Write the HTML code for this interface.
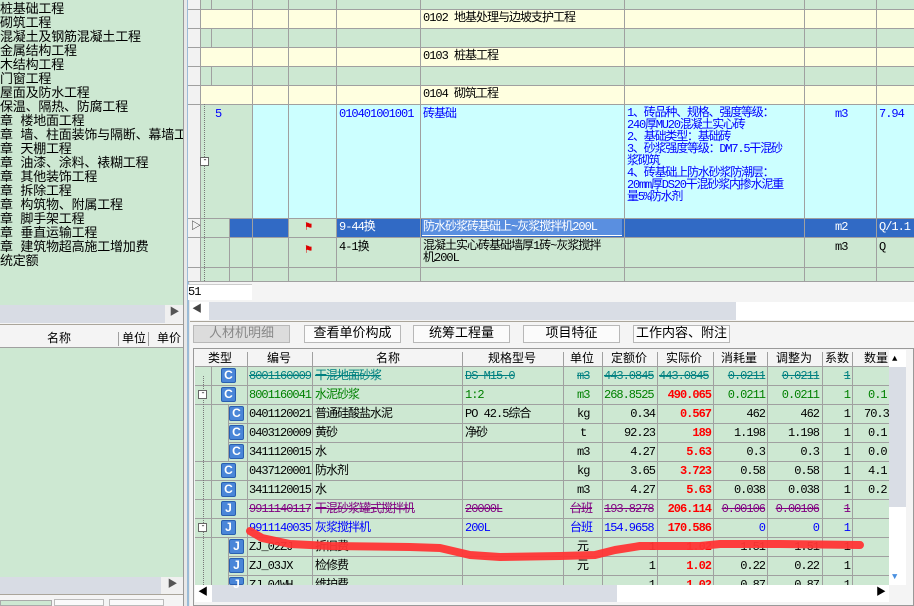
<!DOCTYPE html>
<html><head><meta charset="utf-8"><style>
*{margin:0;padding:0;box-sizing:border-box}
body{width:914px;height:606px;overflow:hidden;background:#f4f4f4;position:relative;font-family:"Liberation Mono","Noto Sans CJK SC",monospace;font-size:12px;letter-spacing:-1px;color:#000}
.a{position:absolute}
.t{position:absolute;white-space:nowrap;line-height:14px}
.vl{position:absolute;width:1px;background:#a0a0a0}
.hl{position:absolute;height:1px;background:#a0a0a0}
.ic{position:absolute;width:15px;height:15px;background:#4a86d8;border:1px solid #2a5fb0;border-radius:2px;color:#fff;font:bold 12px "Liberation Sans",sans-serif;text-align:center;line-height:13px;letter-spacing:0}
.btn{position:absolute;top:325px;height:18px;width:97px;background:#fbfbfb;border:1px solid #b8b8b8;text-align:center;line-height:16px;font-size:13px;white-space:nowrap;letter-spacing:0}
.r{text-align:right}
</style></head><body>
<!-- left panel -->
<div class="a" style="left:0;top:0;width:183px;height:305px;background:#cde8d2"></div>
<div class="t" style="left:0;top:3px;font-size:13px;line-height:14px;letter-spacing:-0.2px">桩基础工程<br>砌筑工程<br>混凝土及钢筋混凝土工程<br>金属结构工程<br>木结构工程<br>门窗工程<br>屋面及防水工程<br>保温、隔热、防腐工程<br>章 楼地面工程<br>章 墙、柱面装饰与隔断、幕墙工程<br>章 天棚工程<br>章 油漆、涂料、裱糊工程<br>章 其他装饰工程<br>章 拆除工程<br>章 构筑物、附属工程<br>章 脚手架工程<br>章 垂直运输工程<br>章 建筑物超高施工增加费<br>统定额</div>
<div class="a" style="left:0;top:305px;width:183px;height:18px;background:#d8dce4"></div>
<div class="a" style="left:165px;top:305px;width:18px;height:18px;background:#f0f0f0;color:#555;font-size:10px;text-align:center;line-height:18px">▶</div>
<div class="hl" style="left:0;top:324px;width:183px;background:#aaa59a"></div>
<div class="a" style="left:0;top:330px;width:183px;height:18px;background:#f4f4f4;border-bottom:1px solid #a0a0a0"></div>
<div class="t" style="left:47px;top:332px;letter-spacing:0">名称</div>
<div class="vl" style="left:118px;top:332px;height:14px"></div>
<div class="t" style="left:122px;top:332px;letter-spacing:0">单位</div>
<div class="vl" style="left:148px;top:332px;height:14px"></div>
<div class="t" style="left:157px;top:332px;letter-spacing:0">单价</div>
<div class="a" style="left:0;top:348px;width:183px;height:229px;background:#cde8d2"></div>
<div class="a" style="left:0;top:577px;width:183px;height:17px;background:#d8dce4"></div>
<div class="a" style="left:161px;top:577px;width:22px;height:17px;background:#f0f0f0;color:#555;font-size:10px;text-align:center;line-height:17px">▶</div>
<div class="hl" style="left:0;top:594px;width:183px;background:#aaa59a"></div>
<div class="a" style="left:0;top:600px;width:52px;height:6px;border:1px solid #aaa;background:#cde8d2"></div>
<div class="a" style="left:54px;top:599px;width:50px;height:7px;border:1px solid #bbb;background:#fafafa"></div>
<div class="a" style="left:109px;top:599px;width:55px;height:7px;border:1px solid #bbb;background:#fafafa"></div>
<!-- divider -->
<div class="a" style="left:183px;top:0;width:7px;height:606px;background:#e8e8e8;border-left:1px solid #999"></div>
<div class="a" style="left:187px;top:0;width:2px;height:606px;background:#9bbbd6"></div>

<!-- top grid -->
<div class="a" style="left:188px;top:0;width:726px;height:281px;background:#cde8d2"></div>
<div class="a" style="left:188px;top:0;width:12px;height:281px;background:#f2f2f2"></div>
<div class="a" style="left:200px;top:9px;width:714px;height:19px;background:#ffffe0"></div>
<div class="a" style="left:200px;top:47px;width:714px;height:19px;background:#ffffe0"></div>
<div class="a" style="left:200px;top:85px;width:714px;height:19px;background:#ffffe0"></div>
<div class="a" style="left:252px;top:104px;width:662px;height:114px;background:#ccffff"></div>
<div class="a" style="left:229px;top:218px;width:59px;height:19px;background:#316ac5"></div>
<div class="a" style="left:336px;top:218px;width:578px;height:19px;background:#316ac5"></div>
<div class="vl" style="left:200px;top:0;height:281px"></div>
<div class="vl" style="left:211px;top:0;height:9px"></div>
<div class="vl" style="left:211px;top:28px;height:19px"></div>
<div class="vl" style="left:211px;top:66px;height:19px"></div>
<div class="vl" style="left:229px;top:218px;height:63px"></div>
<div class="vl" style="left:252px;top:0;height:281px"></div>
<div class="vl" style="left:288px;top:0;height:281px"></div>
<div class="vl" style="left:336px;top:0;height:281px"></div>
<div class="vl" style="left:420px;top:0;height:281px"></div>
<div class="vl" style="left:624px;top:0;height:281px"></div>
<div class="vl" style="left:804px;top:0;height:281px"></div>
<div class="vl" style="left:876px;top:0;height:281px"></div>
<div class="hl" style="left:188px;top:9px;width:726px"></div>
<div class="hl" style="left:188px;top:28px;width:726px"></div>
<div class="hl" style="left:188px;top:47px;width:726px"></div>
<div class="hl" style="left:188px;top:66px;width:726px"></div>
<div class="hl" style="left:188px;top:85px;width:726px"></div>
<div class="hl" style="left:188px;top:104px;width:726px"></div>
<div class="hl" style="left:188px;top:218px;width:726px"></div>
<div class="hl" style="left:188px;top:237px;width:726px"></div>
<div class="hl" style="left:188px;top:267px;width:726px"></div>
<div class="hl" style="left:188px;top:281px;width:726px"></div>
<div class="a" style="left:204px;top:104px;width:1px;height:177px;border-left:1px dotted #777"></div>
<div class="a" style="left:200px;top:157px;width:9px;height:9px;border:1px solid #666;background:#fff;font-size:8px;line-height:6px;text-align:center">-</div>
<div class="t" style="left:423px;top:11px">0102 地基处理与边坡支护工程</div>
<div class="t" style="left:423px;top:49px">0103 桩基工程</div>
<div class="t" style="left:423px;top:87px">0104 砌筑工程</div>
<div class="t" style="left:215px;top:107px;color:#0000ff">5</div>
<div class="t" style="left:339px;top:107px;color:#0000ff">010401001001</div>
<div class="t" style="left:423px;top:107px;color:#0000ff">砖基础</div>
<div class="t" style="left:627px;top:107px;color:#0000ff;line-height:12px;font-size:12px;letter-spacing:-1.2px">1、砖品种、规格、强度等级：<br>240厚MU20混凝土实心砖<br>2、基础类型：基础砖<br>3、砂浆强度等级：DM7.5干混砂<br>浆砌筑<br>4、砖基础上防水砂浆防潮层：<br>20mm厚DS20干混砂浆内掺水泥重<br>量5%防水剂</div>
<div class="t" style="left:835px;top:107px;color:#0000ff">m3</div>
<div class="t" style="left:879px;top:107px;color:#0000ff">7.94</div>
<div class="t" style="left:191px;top:221px;font-size:10px">▷</div>
<div class="t" style="left:305px;top:220px;color:#d00;font-size:12px">⚑</div>
<div class="t" style="left:305px;top:243px;color:#d00;font-size:12px">⚑</div>
<div class="t" style="left:339px;top:220px;color:#fff">9-44换</div>
<div class="a" style="left:422px;top:219px;width:200px;height:17px;background:#5a8fe0;border-bottom:1px solid #fff"></div>
<div class="t" style="left:423px;top:220px;color:#fff">防水砂浆砖基础上~灰浆搅拌机200L</div>
<div class="t" style="left:835px;top:220px;color:#fff">m2</div>
<div class="t" style="left:879px;top:220px;color:#fff">Q/1.1</div>
<div class="t" style="left:339px;top:240px">4-1换</div>
<div class="t" style="left:423px;top:240px;line-height:12px">混凝土实心砖基础墙厚1砖~灰浆搅拌<br>机200L</div>
<div class="t" style="left:835px;top:240px">m3</div>
<div class="t" style="left:879px;top:240px">Q</div>
<div class="a" style="left:188px;top:284px;width:64px;height:16px;background:#fff;border-top:1px solid #ccc"></div>
<div class="t" style="left:188px;top:285px">51</div>
<div class="a" style="left:190px;top:302px;width:724px;height:18px;background:#fff"></div>
<div class="a" style="left:209px;top:302px;width:527px;height:18px;background:#d9dde5"></div>
<div class="t" style="left:192px;top:304px;font-size:10px;color:#444">◀</div>
<div class="hl" style="left:190px;top:321px;width:724px;background:#aaa59a"></div>

<!-- buttons -->
<div class="btn" style="left:193px;background:#dcdcdc;color:#888">人材机明细</div>
<div class="btn" style="left:304px">查看单价构成</div>
<div class="btn" style="left:413px">统筹工程量</div>
<div class="btn" style="left:523px">项目特征</div>
<div class="btn" style="left:633px">工作内容、附注</div>

<!-- bottom table -->
<div class="a" style="left:193px;top:348px;width:721px;height:258px;border:1px solid #999;background:#f4f4f4"></div>
<div class="a" style="left:195px;top:367px;width:694px;height:218px;background:#cde8d2"></div>
<div class="a" style="left:889px;top:350px;width:17px;height:235px;background:#fff"></div>
<div class="a" style="left:889px;top:367px;width:17px;height:140px;background:#d9dde5"></div>
<div class="t" style="left:892px;top:352px;font-size:9px">▲</div>
<div class="t" style="left:892px;top:570px;font-size:9px;color:#4a90e0">▼</div>
<div class="a" style="left:195px;top:585px;width:694px;height:17px;background:#fff"></div>
<div class="a" style="left:212px;top:585px;width:405px;height:17px;background:#d9dde5"></div>
<div class="t" style="left:198px;top:587px;font-size:10px">◀</div>
<div class="t" style="left:876px;top:587px;font-size:10px">▶</div>
<div style="letter-spacing:0">
<div class="t" style="left:208px;top:352px">类型</div>
<div class="t" style="left:267px;top:352px">编号</div>
<div class="t" style="left:376px;top:352px">名称</div>
<div class="t" style="left:488px;top:352px">规格型号</div>
<div class="t" style="left:570px;top:352px">单位</div>
<div class="t" style="left:611px;top:352px">定额价</div>
<div class="t" style="left:666px;top:352px">实际价</div>
<div class="t" style="left:721px;top:352px">消耗量</div>
<div class="t" style="left:776px;top:352px">调整为</div>
<div class="t" style="left:825px;top:352px">系数</div>
<div class="t" style="left:864px;top:352px">数量</div>
</div>
<div class="vl" style="left:247px;top:352px;height:233px"></div>
<div class="vl" style="left:312px;top:352px;height:233px"></div>
<div class="vl" style="left:462px;top:352px;height:233px"></div>
<div class="vl" style="left:563px;top:352px;height:233px"></div>
<div class="vl" style="left:602px;top:352px;height:233px"></div>
<div class="vl" style="left:657px;top:352px;height:233px"></div>
<div class="vl" style="left:713px;top:352px;height:233px"></div>
<div class="vl" style="left:767px;top:352px;height:233px"></div>
<div class="vl" style="left:822px;top:352px;height:233px"></div>
<div class="vl" style="left:852px;top:352px;height:233px"></div>
<div class="vl" style="left:211px;top:367px;height:218px"></div>
<div class="hl" style="left:195px;top:366px;width:694px"></div>
<div class="hl" style="left:195px;top:385px;width:694px"></div>
<div class="hl" style="left:195px;top:404px;width:694px"></div>
<div class="hl" style="left:228px;top:423px;width:661px"></div>
<div class="hl" style="left:228px;top:442px;width:661px"></div>
<div class="hl" style="left:195px;top:461px;width:694px"></div>
<div class="hl" style="left:195px;top:480px;width:694px"></div>
<div class="hl" style="left:195px;top:499px;width:694px"></div>
<div class="hl" style="left:195px;top:518px;width:694px"></div>
<div class="hl" style="left:195px;top:537px;width:694px"></div>
<div class="hl" style="left:228px;top:556px;width:661px"></div>
<div class="hl" style="left:228px;top:575px;width:661px"></div>
<div class="vl" style="left:228px;top:404px;height:57px"></div>
<div class="vl" style="left:228px;top:537px;height:48px"></div>
<div class="a" style="left:203px;top:376px;width:1px;height:209px;border-left:1px dotted #777"></div>
<div class="a" style="left:198px;top:390px;width:9px;height:9px;border:1px solid #666;background:#fff;font-size:8px;line-height:6px;text-align:center">-</div>
<div class="a" style="left:198px;top:523px;width:9px;height:9px;border:1px solid #666;background:#fff;font-size:8px;line-height:6px;text-align:center">-</div>

<div class="ic" style="left:221px;top:368px">C</div>
<div class="ic" style="left:221px;top:387px">C</div>
<div class="ic" style="left:229px;top:406px">C</div>
<div class="ic" style="left:229px;top:425px">C</div>
<div class="ic" style="left:229px;top:444px">C</div>
<div class="ic" style="left:221px;top:463px">C</div>
<div class="ic" style="left:221px;top:482px">C</div>
<div class="ic" style="left:221px;top:501px">J</div>
<div class="ic" style="left:221px;top:520px">J</div>
<div class="ic" style="left:229px;top:539px">J</div>
<div class="ic" style="left:229px;top:558px">J</div>
<div class="ic" style="left:229px;top:577px;height:8px">J</div>

<div style="position:absolute;left:0;top:0;font-size:12px">
<div class="t" style="left:249px;top:369px;color:#008080;text-decoration:line-through">8001160009</div>
<div class="t" style="left:315px;top:369px;color:#008080;text-decoration:line-through">干混地面砂浆</div>
<div class="t" style="left:465px;top:369px;color:#008080;text-decoration:line-through">DS M15.0</div>
<div class="t" style="left:577px;top:369px;color:#008080;text-decoration:line-through">m3</div>
<div class="t" style="left:604px;top:369px;color:#008080;text-decoration:line-through">443.0845</div>
<div class="t" style="left:659px;top:369px;color:#008080;text-decoration:line-through">443.0845</div>
<div class="t r" style="left:715px;top:369px;width:50px;color:#008080;text-decoration:line-through">0.0211</div>
<div class="t r" style="left:769px;top:369px;width:50px;color:#008080;text-decoration:line-through">0.0211</div>
<div class="t r" style="left:824px;top:369px;width:26px;color:#008080;text-decoration:line-through">1</div>

<div class="t" style="left:249px;top:388px;color:#008000">8001160041</div>
<div class="t" style="left:315px;top:388px;color:#008000">水泥砂浆</div>
<div class="t" style="left:465px;top:388px;color:#008000">1:2</div>
<div class="t" style="left:577px;top:388px;color:#008000">m3</div>
<div class="t" style="left:604px;top:388px;color:#008000">268.8525</div>
<div class="t r" style="left:659px;top:388px;width:52px;color:#f00;font-weight:bold">490.065</div>
<div class="t r" style="left:715px;top:388px;width:50px;color:#008000">0.0211</div>
<div class="t r" style="left:769px;top:388px;width:50px;color:#008000">0.0211</div>
<div class="t r" style="left:824px;top:388px;width:26px;color:#008000">1</div>
<div class="t" style="left:868px;top:388px;color:#008000">0.1</div>

<div class="t" style="left:249px;top:407px">0401120021</div><div class="t" style="left:315px;top:407px">普通硅酸盐水泥</div><div class="t" style="left:465px;top:407px">PO 42.5综合</div><div class="t" style="left:577px;top:407px">kg</div><div class="t r" style="left:604px;top:407px;width:51px">0.34</div><div class="t r" style="left:659px;top:407px;width:52px;color:#f00;font-weight:bold">0.567</div><div class="t r" style="left:715px;top:407px;width:50px">462</div><div class="t r" style="left:769px;top:407px;width:50px">462</div><div class="t r" style="left:824px;top:407px;width:26px">1</div><div class="t" style="left:864px;top:407px">70.3</div>

<div class="t" style="left:249px;top:426px">0403120009</div><div class="t" style="left:315px;top:426px">黄砂</div><div class="t" style="left:465px;top:426px">净砂</div><div class="t" style="left:580px;top:426px">t</div><div class="t r" style="left:604px;top:426px;width:51px">92.23</div><div class="t r" style="left:659px;top:426px;width:52px;color:#f00;font-weight:bold">189</div><div class="t r" style="left:715px;top:426px;width:50px">1.198</div><div class="t r" style="left:769px;top:426px;width:50px">1.198</div><div class="t r" style="left:824px;top:426px;width:26px">1</div><div class="t" style="left:868px;top:426px">0.1</div>

<div class="t" style="left:249px;top:445px">3411120015</div><div class="t" style="left:315px;top:445px">水</div><div class="t" style="left:577px;top:445px">m3</div><div class="t r" style="left:604px;top:445px;width:51px">4.27</div><div class="t r" style="left:659px;top:445px;width:52px;color:#f00;font-weight:bold">5.63</div><div class="t r" style="left:715px;top:445px;width:50px">0.3</div><div class="t r" style="left:769px;top:445px;width:50px">0.3</div><div class="t r" style="left:824px;top:445px;width:26px">1</div><div class="t" style="left:868px;top:445px">0.0</div>

<div class="t" style="left:249px;top:464px">0437120001</div><div class="t" style="left:315px;top:464px">防水剂</div><div class="t" style="left:577px;top:464px">kg</div><div class="t r" style="left:604px;top:464px;width:51px">3.65</div><div class="t r" style="left:659px;top:464px;width:52px;color:#f00;font-weight:bold">3.723</div><div class="t r" style="left:715px;top:464px;width:50px">0.58</div><div class="t r" style="left:769px;top:464px;width:50px">0.58</div><div class="t r" style="left:824px;top:464px;width:26px">1</div><div class="t" style="left:868px;top:464px">4.1</div>

<div class="t" style="left:249px;top:483px">3411120015</div><div class="t" style="left:315px;top:483px">水</div><div class="t" style="left:577px;top:483px">m3</div><div class="t r" style="left:604px;top:483px;width:51px">4.27</div><div class="t r" style="left:659px;top:483px;width:52px;color:#f00;font-weight:bold">5.63</div><div class="t r" style="left:715px;top:483px;width:50px">0.038</div><div class="t r" style="left:769px;top:483px;width:50px">0.038</div><div class="t r" style="left:824px;top:483px;width:26px">1</div><div class="t" style="left:868px;top:483px">0.2</div>

<div class="t" style="left:249px;top:502px;color:#800080;text-decoration:line-through">9911140117</div><div class="t" style="left:315px;top:502px;color:#800080;text-decoration:line-through">干混砂浆罐式搅拌机</div><div class="t" style="left:465px;top:502px;color:#800080;text-decoration:line-through">20000L</div><div class="t" style="left:570px;top:502px;color:#800080;text-decoration:line-through">台班</div><div class="t" style="left:604px;top:502px;color:#800080;text-decoration:line-through">193.8278</div><div class="t r" style="left:659px;top:502px;width:52px;color:#f00;font-weight:bold">206.114</div><div class="t r" style="left:715px;top:502px;width:50px;color:#800080;text-decoration:line-through">0.00106</div><div class="t r" style="left:769px;top:502px;width:50px;color:#800080;text-decoration:line-through">0.00106</div><div class="t r" style="left:824px;top:502px;width:26px;color:#800080;text-decoration:line-through">1</div>

<div class="t" style="left:249px;top:521px;color:#0000ff">9911140035</div><div class="t" style="left:315px;top:521px;color:#0000ff">灰浆搅拌机</div><div class="t" style="left:465px;top:521px;color:#0000ff">200L</div><div class="t" style="left:570px;top:521px;color:#0000ff">台班</div><div class="t" style="left:604px;top:521px;color:#0000ff">154.9658</div><div class="t r" style="left:659px;top:521px;width:52px;color:#f00;font-weight:bold">170.586</div><div class="t r" style="left:715px;top:521px;width:50px;color:#0000ff">0</div><div class="t r" style="left:769px;top:521px;width:50px;color:#0000ff">0</div><div class="t r" style="left:824px;top:521px;width:26px;color:#0000ff">1</div>

<div class="t" style="left:249px;top:540px">ZJ_02ZJ</div><div class="t" style="left:315px;top:540px">折旧费</div><div class="t" style="left:577px;top:540px">元</div><div class="t r" style="left:604px;top:540px;width:51px">1</div><div class="t r" style="left:659px;top:540px;width:52px;color:#f00;font-weight:bold">1.02</div><div class="t r" style="left:715px;top:540px;width:50px">1.51</div><div class="t r" style="left:769px;top:540px;width:50px">1.51</div><div class="t r" style="left:824px;top:540px;width:26px">1</div>

<div class="t" style="left:249px;top:559px">ZJ_03JX</div><div class="t" style="left:315px;top:559px">检修费</div><div class="t" style="left:577px;top:559px">元</div><div class="t r" style="left:604px;top:559px;width:51px">1</div><div class="t r" style="left:659px;top:559px;width:52px;color:#f00;font-weight:bold">1.02</div><div class="t r" style="left:715px;top:559px;width:50px">0.22</div><div class="t r" style="left:769px;top:559px;width:50px">0.22</div><div class="t r" style="left:824px;top:559px;width:26px">1</div>
</div>
<div class="a" style="left:195px;top:578px;width:694px;height:7px;overflow:hidden">
<div class="t" style="left:54px;top:0">ZJ_04WH</div><div class="t" style="left:120px;top:0">维护费</div><div class="t r" style="left:409px;top:0;width:51px">1</div><div class="t r" style="left:464px;top:0;width:52px;color:#f00;font-weight:bold">1.02</div><div class="t r" style="left:520px;top:0;width:50px">0.87</div><div class="t r" style="left:574px;top:0;width:50px">0.87</div><div class="t r" style="left:629px;top:0;width:26px">1</div>
</div>
<svg class="a" style="left:0;top:0" width="914" height="606">
<polyline points="250,531 262,538 290,544 330,546 410,547 440,548 470,555 500,557 560,556 595,555 615,550 640,546 700,546 720,544 780,544 860,545" fill="none" stroke="#ff3535" stroke-width="8" stroke-linecap="round" stroke-linejoin="round" opacity="0.95"/>
</svg>
</body></html>
